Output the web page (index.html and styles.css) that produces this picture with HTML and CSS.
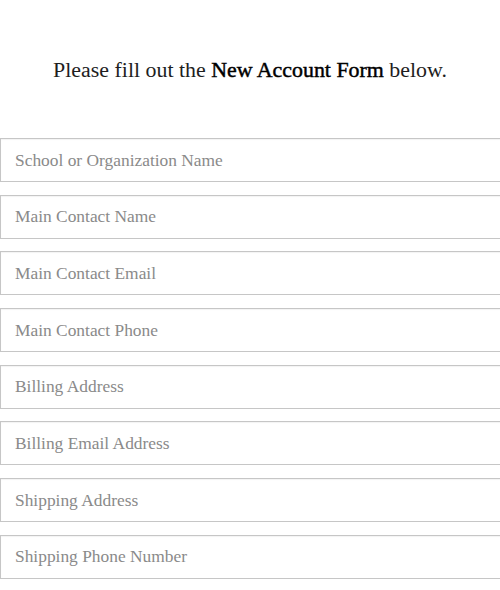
FILE: index.html
```html
<!DOCTYPE html>
<html>
<head>
<meta charset="utf-8">
<link rel="stylesheet" href="styles.css">
</head>
<body>
<div class="page">
  <p class="intro">Please fill out the <strong>New Account Form</strong> below.</p>
  <form class="form">
    <input class="field" type="text" placeholder="School or Organization Name">
    <input class="field" type="text" placeholder="Main Contact Name">
    <input class="field" type="text" placeholder="Main Contact Email">
    <input class="field" type="text" placeholder="Main Contact Phone">
    <input class="field" type="text" placeholder="Billing Address">
    <input class="field" type="text" placeholder="Billing Email Address">
    <input class="field" type="text" placeholder="Shipping Address">
    <input class="field" type="text" placeholder="Shipping Phone Number">
  </form>
</div>
</body>
</html>
```

FILE: styles.css
```css
html, body {
  margin: 0;
  padding: 0;
  background: #fff;
}
.page {
  width: 500px;
  overflow: hidden;
  font-family: "Liberation Serif", "Times New Roman", serif;
}
.intro {
  margin: 57px 0 0;
  text-align: center;
  font-size: 21.9px;
  line-height: 26px;
  color: #1e1e1e;
}
.intro strong {
  font-weight: normal;
  color: #000;
  -webkit-text-stroke: 0.45px #000;
}
.form {
  margin-top: 55px;
  display: flex;
  flex-direction: column;
  gap: 12.7px;
}
.field {
  box-sizing: border-box;
  width: 520px;
  height: 44px;
  margin: 0;
  padding: 0 14px;
  border: 1px solid #c6c6c6;
  box-shadow: inset 0 1px 1px rgba(0,0,0,0.05);
  border-radius: 0;
  background: #fff;
  font-family: "Liberation Serif", "Times New Roman", serif;
  font-size: 17.4px;
  color: #333;
  outline: none;
}
.field::placeholder {
  color: #8a8a8a;
  opacity: 1;
}
```
